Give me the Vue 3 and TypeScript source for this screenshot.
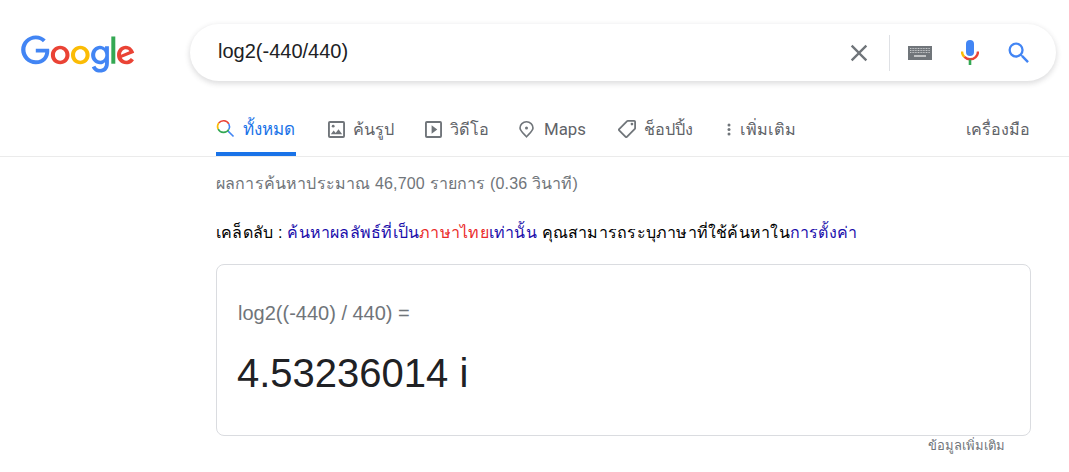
<template>
  <div class="page">
    <header class="top">
      <svg class="logo" viewBox="0 0 272 92" aria-label="Google">
        <path fill="#EA4335" d="M115.75 47.18c0 12.77-9.99 22.18-22.25 22.18s-22.25-9.41-22.25-22.18C71.25 34.32 81.24 25 93.5 25s22.25 9.32 22.25 22.18zm-9.74 0c0-7.98-5.79-13.44-12.51-13.44S80.99 39.2 80.99 47.18c0 7.9 5.79 13.44 12.51 13.44s12.51-5.55 12.51-13.44z" />
        <path fill="#FBBC05" d="M163.75 47.18c0 12.77-9.99 22.18-22.25 22.18s-22.25-9.41-22.25-22.18c0-12.85 9.99-22.18 22.25-22.18s22.25 9.32 22.25 22.18zm-9.74 0c0-7.98-5.79-13.44-12.51-13.44s-12.51 5.46-12.51 13.44c0 7.9 5.79 13.44 12.51 13.44s12.51-5.55 12.51-13.44z" />
        <path fill="#4285F4" d="M209.75 26.34v39.82c0 16.38-9.66 23.07-21.08 23.07-10.75 0-17.22-7.19-19.66-13.07l8.48-3.53c1.51 3.61 5.21 7.87 11.17 7.87 7.31 0 11.84-4.51 11.84-13v-3.19h-.34c-2.18 2.69-6.38 5.04-11.68 5.04-11.09 0-21.25-9.66-21.25-22.09 0-12.52 10.16-22.26 21.25-22.26 5.29 0 9.49 2.35 11.68 4.96h.34v-3.61h9.25zm-8.56 20.92c0-7.81-5.21-13.52-11.84-13.52-6.72 0-12.35 5.71-12.35 13.52 0 7.73 5.63 13.36 12.35 13.36 6.63 0 11.84-5.63 11.84-13.36z" />
        <path fill="#34A853" d="M225 3v65h-9.5V3h9.5z" />
        <path fill="#EA4335" d="M262.02 54.48l7.56 5.04c-2.44 3.61-8.32 9.83-18.48 9.83-12.6 0-22.01-9.74-22.01-22.18 0-13.19 9.49-22.18 20.92-22.18 11.51 0 17.14 9.16 18.98 14.11l1.01 2.52-29.65 12.28c2.27 4.45 5.8 6.72 10.75 6.72 4.96 0 8.4-2.44 10.92-6.14zm-23.27-7.98l19.82-8.23c-1.09-2.77-4.37-4.7-8.23-4.7-4.95 0-11.84 4.37-11.59 12.93z" />
        <path fill="#4285F4" d="M35.29 41.41V32H67c.31 1.64.47 3.58.47 5.68 0 7.06-1.93 15.79-8.15 22.01-6.05 6.3-13.78 9.66-24.02 9.66C16.32 69.35.36 53.89.36 34.91.36 15.93 16.32.47 35.3.47c10.5 0 17.98 4.12 23.6 9.49l-6.64 6.64c-4.03-3.78-9.49-6.72-16.97-6.72-13.86 0-24.7 11.17-24.7 25.03 0 13.86 10.84 25.03 24.7 25.03 8.99 0 14.11-3.61 17.39-6.89 2.66-2.66 4.41-6.46 5.1-11.65l-22.49.01z" />
      </svg>
      <div class="searchbox">
        <span class="query">{{ query }}</span>
        <svg class="clear" viewBox="0 0 24 24">
          <path fill="#70757a" d="M19 6.41 17.59 5 12 10.59 6.41 5 5 6.41 10.59 12 5 17.59 6.41 19 12 13.41 17.59 19 19 17.59 13.41 12z" />
        </svg>
        <span class="divider"></span>
        <svg class="keyboard" viewBox="0 0 24 14">
          <rect width="24" height="14" fill="#70757a" />
          <path stroke="#c6c8ca" stroke-width="1" stroke-dasharray="1 .6" d="M2 2.5h20M2 4.5h20M2 6.5h20" />
          <path stroke="#e4e5e6" stroke-width="1.4" d="M6 10h12" />
        </svg>
        <svg class="mic" viewBox="0 0 18 25">
          <rect x="5" y="0" width="8" height="16" rx="4" fill="#4285f4" />
          <path fill="none" stroke="#fbbc05" stroke-width="2.4" d="M1 11.500c0 2.200.8 4 2.400 5.400" />
          <path fill="none" stroke="#ea4335" stroke-width="2.400" d="M17 11.500c0 4.600-3.600 7.800-8 7.800-2.200 0-4.100-.9-5.600-2.400" />
          <rect x="7.700" y="19.500" width="2.600" height="5.500" fill="#34a853" />
        </svg>
        <svg class="magnifier" viewBox="0 0 24 24">
          <path fill="#4285f4" d="M15.500 14h-.79l-.28-.27A6.470 6.470 0 0 0 16 9.500 6.500 6.500 0 1 0 9.500 16c1.610 0 3.090-.59 4.230-1.570l.27.28v.79l5 4.990L20.490 19l-4.990-5zm-6 0C7.010 14 5 11.990 5 9.500S7.010 5 9.500 5 14 7.010 14 9.500 11.990 14 9.500 14z" />
        </svg>
      </div>
    </header>

    <nav class="tabs">
      <a class="tab active">
        <svg class="tab-icon" viewBox="3 3 18 18">
          <path fill="none" stroke="#4285f4" stroke-width="1.7" d="m14.500 14.500 6 6" />
          <path fill="none" stroke="#ea4335" stroke-width="1.7" d="M4.800 6.200A6.500 6.500 0 0 1 15.500 7" />
          <path fill="none" stroke="#fbbc05" stroke-width="1.7" d="M4.800 6.200a6.500 6.500 0 0 0-.6 6.500" />
          <path fill="none" stroke="#34a853" stroke-width="1.7" d="M4.200 12.700a6.500 6.500 0 0 0 11.300.300" />
          <path fill="none" stroke="#4285f4" stroke-width="1.7" d="M15.500 13a6.500 6.500 0 0 0 0-6" />
        </svg>
        ทั้งหมด
      </a>
      <a class="tab images">
        <svg class="tab-icon" viewBox="3 3 18 18">
          <path fill="#70757a" d="M19 5v14H5V5h14m0-2H5a2 2 0 0 0-2 2v14a2 2 0 0 0 2 2h14a2 2 0 0 0 2-2V5a2 2 0 0 0-2-2zm-4.860 8.860-3 3.870L9 13.140 6 17h12l-3.860-5.140z" />
          <circle cx="8.500" cy="8.500" r="1.500" fill="#70757a" />
        </svg>
        ค้นรูป
      </a>
      <a class="tab">
        <svg class="tab-icon" viewBox="3 3 18 18">
          <path fill="#70757a" d="M10 16.500l6-4.500-6-4.500v9zM19 3H5a2 2 0 0 0-2 2v14a2 2 0 0 0 2 2h14a2 2 0 0 0 2-2V5a2 2 0 0 0-2-2zm0 16H5V5h14v14z" />
        </svg>
        วิดีโอ
      </a>
      <a class="tab maps">
        <svg class="pin" viewBox="0 0 15 17">
          <path fill="none" stroke="#70757a" stroke-width="1.6" d="M7.500 15.800C5 13 1 9.600 1 6.900a6.500 6.100 0 0 1 13 0c0 2.700-4 6.100-6.500 8.900z" />
          <circle cx="7.500" cy="6.900" r="1.500" fill="#70757a" />
        </svg>
        Maps
      </a>
      <a class="tab">
        <svg class="tag" viewBox="2 2 20 20">
          <path fill="#70757a" d="M21.410 11.410 12.580 2.580A2 2 0 0 0 11.170 2H4a2 2 0 0 0-2 2v7.170c0 .53.210 1.040.59 1.420l8.830 8.830a2 2 0 0 0 2.830 0l7.170-7.170a2 2 0 0 0 0-2.840zM12.830 20 4 11.170V4h7.170L20 12.830 12.830 20z" transform="matrix(-1 0 0 1 24 0)" />
          <circle cx="17.500" cy="6.500" r="1.500" fill="#70757a" />
        </svg>
        ช็อปปิ้ง
      </a>
      <a class="tab more">
        <svg class="dots" viewBox="0 0 4 13">
          <circle cx="2" cy="2" r="1.500" fill="#70757a" />
          <circle cx="2" cy="6.500" r="1.500" fill="#70757a" />
          <circle cx="2" cy="11" r="1.500" fill="#70757a" />
        </svg>
        เพิ่มเติม
      </a>
      <a class="tab tools">เครื่องมือ</a>
    </nav>

    <main class="results">
      <div class="stats">ผลการค้นหาประมาณ 46,700 รายการ (0.36 วินาที)</div>
      <p class="tip">
        เคล็ดลับ : <span class="link">ค้นหาผลลัพธ์ที่เป็น</span><span class="thai">ภาษาไทย</span><span class="link">เท่านั้น</span>
        คุณสามารถระบุภาษาที่ใช้ค้นหาใน<span class="link">การตั้งค่า</span>
      </p>
      <section class="card">
        <div class="expr">log2((-440) / 440) =</div>
        <div class="answer">4.53236014 i</div>
      </section>
      <div class="more-info">ข้อมูลเพิ่มเติม</div>
    </main>
  </div>
</template>

<script setup lang="ts">
const query: string = 'log2(-440/440)'
</script>

<style>
html,
body {
  margin: 0;
  background: #fff;
  overflow: hidden;
}
</style>

<style scoped>
.page {
  width: 1069px;
  height: 472px;
  font-family: 'Liberation Sans', Arial, 'Noto Sans', sans-serif;
  color: #202124;
  overflow: hidden;
}

.top {
  display: flex;
  align-items: flex-start;
  padding: 24px 13px 0 21px;
}

.logo {
  width: 114px;
  height: 39px;
  margin-top: 11px;
  margin-right: 55px;
  flex-shrink: 0;
}

.searchbox {
  flex: 1;
  height: 57px;
  display: flex;
  align-items: center;
  padding: 0 23px 0 28px;
  border-radius: 29px;
  box-shadow: 0 2px 5px 1px rgba(64, 60, 67, 0.16);
}

.query {
  flex: 1;
  padding-bottom: 2px;
  font-size: 20px;
}

.clear {
  width: 28px;
  height: 28px;
}

.divider {
  width: 1px;
  height: 36px;
  background: #dfe1e5;
  margin: 0 18px 0 16px;
}

.keyboard {
  width: 24px;
  height: 14px;
  margin-right: 29px;
}

.mic {
  width: 18px;
  height: 25px;
  margin-right: 26px;
}

.magnifier {
  width: 28px;
  height: 28px;
}

.tabs {
  display: flex;
  height: 52px;
  margin-top: 23px;
  padding: 0 39px 0 216px;
  border-bottom: 1px solid #ebebeb;
  font-family: Roboto, 'Noto Sans', sans-serif;
  font-size: 16.2px;
  color: #5f6368;
}

.tab {
  display: flex;
  align-items: center;
  gap: 8px;
  height: 52px;
  box-sizing: border-box;
  margin-right: 32px;
  padding-bottom: 2px;
  white-space: nowrap;
}

.tab.active {
  color: #1a73e8;
  font-size: 17px;
  border-bottom: 4px solid #1a73e8;
  padding: 0 1px 0 0;
}

.tab-icon {
  width: 17px;
  height: 17px;
  overflow: visible;
  flex-shrink: 0;
}

.active .tab-icon {
  margin-left: 1px;
  margin-right: 1px;
}

.images {
  margin-right: 31px;
}

.maps {
  font-size: 16.8px;
  margin-left: -2px;
  margin-right: 32px;
}

.pin {
  width: 15px;
  height: 17px;
  margin-right: 2px;
}

.tag {
  width: 18px;
  height: 18px;
}

.more {
  gap: 9px;
  margin-left: 2px;
}

.dots {
  width: 4px;
  height: 13px;
}

.tools {
  margin: 0 0 0 auto;
  font-size: 16px;
}

.results {
  padding: 0 38px 0 216px;
}

.stats {
  margin-top: 18px;
  font-size: 16px;
  line-height: 18px;
  letter-spacing: 0.16px;
  color: #70757a;
}

.tip {
  margin: 30px 0 0;
  font-size: 16px;
  line-height: 20px;
  letter-spacing: 0.22px;
  color: #000;
}

.link {
  color: #1a0dab;
}

.thai {
  color: #ea2b2b;
}

.card {
  height: 172px;
  margin-top: 21px;
  box-sizing: border-box;
  padding: 36px 20px 0 21px;
  border: 1px solid #dadce0;
  border-radius: 8px;
}

.expr {
  font-size: 20px;
  line-height: 24px;
  color: #70757a;
}

.answer {
  margin-top: 24px;
  margin-left: -1px;
  font-size: 40px;
  line-height: 48px;
}

.more-info {
  margin: 1px 26px 0 0;
  text-align: right;
  font-size: 13px;
  line-height: 18px;
  color: #70757a;
}
</style>
